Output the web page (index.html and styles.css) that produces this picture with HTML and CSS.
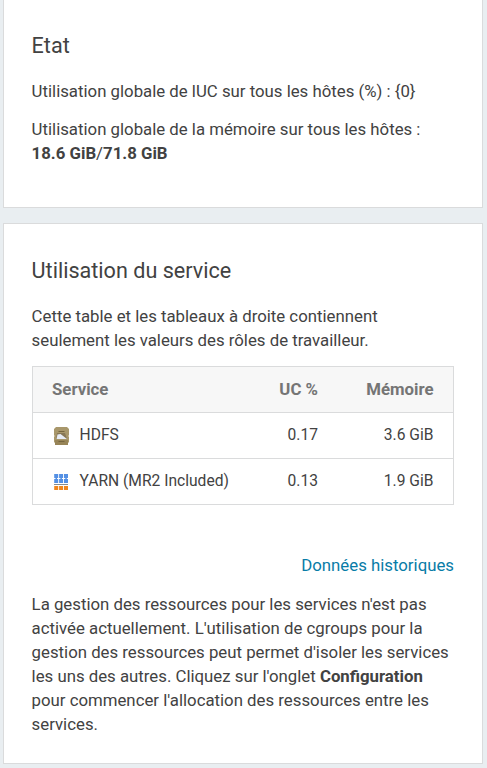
FILE: index.html
```html
<!DOCTYPE html>
<html lang="fr">
<head>
<meta charset="utf-8">
<title>Utilisation</title>
<link rel="stylesheet" href="styles.css">
</head>
<body>
<section class="card status">
<h2>Etat</h2>
<p>Utilisation globale de lUC sur tous les hôtes (%) : {0}</p>
<p>Utilisation globale de la mémoire sur tous les hôtes : <br><b>18.6 GiB</b>/<b>71.8 GiB</b></p>
</section>
<section class="card usage">
<h2>Utilisation du service</h2>
<p>Cette table et les tableaux à droite contiennent seulement les valeurs des rôles de travailleur.</p>
<table>
<colgroup><col><col class="col-cpu"><col class="col-memory"></colgroup>
<thead><tr><th>Service</th><th class="num">UC %</th><th class="num">Mémoire</th></tr></thead>
<tbody>
<tr><td><span class="service"><svg class="icon" viewBox="0 -1 18 20"><path d="M4 1h11l2 2v6l-.6 1 .6 1v5l-1 1v2H3v-2l-1-1v-5l.6-1L2 9V3z" fill="#a8976b"/><path d="M3 14h13v5H3z" fill="#978457"/><path d="M5 7h8l2 6H4z" fill="#877756"/><path d="M4.500 13l1-4.500 3-.5 6.500 5z" fill="#e6ebf4"/><path d="M6.500 5.500h6M6.500 15.500h6" stroke="#75653f"/></svg>HDFS</span></td><td class="num">0.17</td><td class="num">3.6 GiB</td></tr>
<tr><td><span class="service"><svg class="icon" viewBox="0 -1 18 20"><path d="M2.200 2h4v4h-4zM7.100 2h4v4h-4zM12 2h4v4h-4zM2.200 7h4v4h-4zM7.100 7h4v4h-4zM12 7h4v4h-4zM3.500 6h1.500v1H3.500zM8.400 6h1.500v1H8.400zM13.300 6h1.500v1h-1.500z" fill="#5490e4"/><path d="M2 12.500h14" stroke="#858b90"/><path d="M2.200 14h4v4h-4zM7.100 14h4v4h-4zM12 14h4v4h-4z" fill="#f0861e"/></svg>YARN (MR2 Included)</span></td><td class="num">0.13</td><td class="num">1.9 GiB</td></tr>
</tbody>
</table>
<div class="history"><a>Données historiques</a></div>
<p>La gestion des ressources pour les services n'est pas activée actuellement. L'utilisation de cgroups pour la gestion des ressources peut permet d'isoler les services les uns des autres. Cliquez sur l'onglet <b>Configuration</b> pour commencer l'allocation des ressources entre les services.</p>
</section>
</body>
</html>
```
FILE: styles.css
```css
* { box-sizing: border-box; }
body { margin: 0; padding: 0 4px 0 3px; height: 768px; overflow: hidden; background: #e9eef1; color: #424242; font: 16.8px/24px Roboto, sans-serif; }
.card { background: #fff; border: 1px solid #dadbdc; padding: 32px 28px 0 27.6px; }
.status { height: 208px; border-top: 0; }
.usage { height: 541px; margin-top: 15px; padding-top: 33px; }
h2 { margin: 0 0 19px; font-size: 21.6px; line-height: 28px; font-weight: 400; }
p { margin: 0 0 14px; }
table { width: 422px; margin-left: .4px; table-layout: fixed; border: 1px solid #dadbdc; border-collapse: collapse; font-size: 15.6px; }
.col-cpu { width: 100px; }
.col-memory { width: 116px; }
th, td { height: 46px; padding: 0 19.5px 2px 19px; text-align: left; border-top: 1px solid #dadbdc; }
th { background: #f7f7f7; color: #757575; font-size: 16.8px; font-weight: 700; }
.num { text-align: right; white-space: nowrap; }
.service { display: flex; align-items: center; white-space: nowrap; }
.icon { width: 18px; height: 20px; margin-right: 9.6px; flex: none; }
.history { margin: 48px 0 15px; text-align: right; }
.history a { color: #087ca7; }
```
